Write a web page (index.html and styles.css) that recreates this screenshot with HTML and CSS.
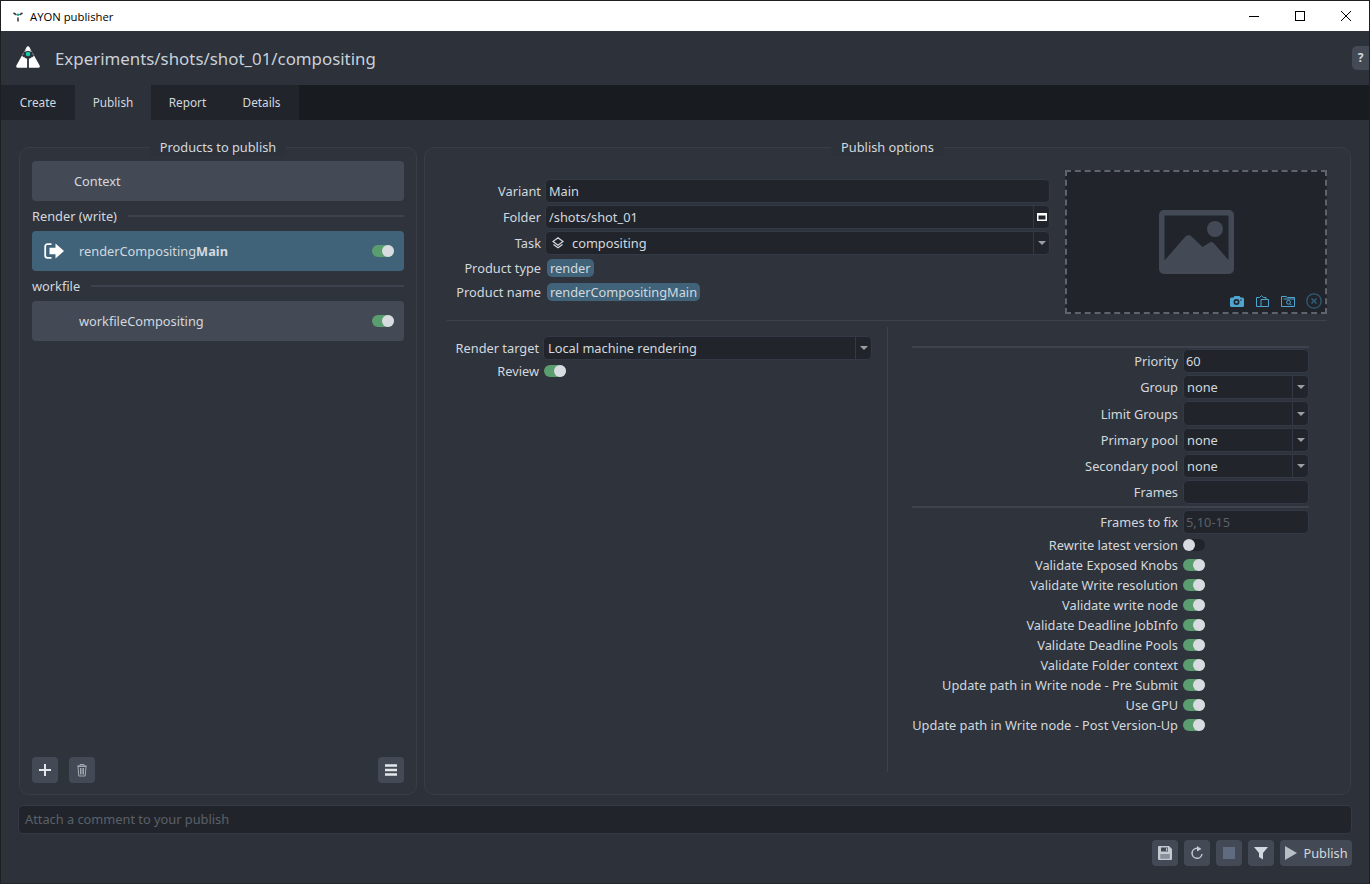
FILE: index.html
```html
<!DOCTYPE html>
<html lang="en">
<head>
<meta charset="utf-8">
<title>AYON publisher</title>
<link rel="stylesheet" href="styles.css">
</head>
<body>
<div class="window">
  <div class="titlebar">
    <svg class="app-icon" viewBox="0 0 12 12"><path d="M1.500 3 4.500 4.800 M10.500 3 7.500 4.800 M6 7.500V11.500" stroke="#333" stroke-width="1.500" fill="none"/><circle cx="6" cy="4.800" r="1.200" fill="#14a88f"/></svg>
    <span class="title-text">AYON publisher</span>
    <div class="win-controls">
      <svg class="win-btn" viewBox="0 0 46 30"><path d="M18 15.500H28" stroke="#000" fill="none"/></svg>
      <svg class="win-btn" viewBox="0 0 46 30"><rect x="18.500" y="10.500" width="9" height="9" stroke="#000" fill="none"/></svg>
      <svg class="win-btn" viewBox="0 0 46 30"><path d="M18 10 28 20M28 10 18 20" stroke="#000" fill="none"/></svg>
    </div>
  </div>

  <header class="header">
    <svg class="logo" viewBox="0 0 24 22">
      <path fill="#fff" stroke="#fff" stroke-width="3" stroke-linejoin="round" d="M12 1.800 22.300 20.300H1.700Z"/>
      <circle cx="12" cy="8" r="4.800" fill="#2c313a"/>
      <path d="M12 11V22M8.300 10.500 6.500 9M15.700 10.500 17.500 9" stroke="#2c313a" stroke-width="1.800" fill="none"/>
      <path fill="#fff" d="M12 1.500 16 6 12 4.700 8 6Z"/>
      <circle cx="12" cy="8" r="2.300" fill="#14c9a8"/>
    </svg>
    <h1 class="context-path">Experiments/shots/shot_01/compositing</h1>
    <div class="help-btn">?</div>
  </header>

  <nav class="tabs">
    <div class="tab tab-create">Create</div>
    <div class="tab tab-publish active">Publish</div>
    <div class="tab tab-report">Report</div>
    <div class="tab tab-details">Details</div>
  </nav>

  <main class="main">
    <div class="panels">
      <section class="panel panel-products">
        <div class="panel-title">Products to publish</div>
        <div class="item item-context"><span>Context</span></div>
        <div class="group-head"><span>Render (write)</span><i></i></div>
        <div class="item selected">
          <svg class="item-icon" viewBox="0 0 20 16"><path d="M7.500 1.200H3.500A2.300 2.300 0 0 0 1.200 3.500V12.500A2.300 2.300 0 0 0 3.500 14.800H7.500" stroke="#fff" stroke-width="1.800" fill="none"/><path fill="#fff" d="M5.500 4.800H11.500V.5L20 8 11.500 15.500V11.200H5.500Z"/></svg>
          <span class="item-name">renderCompositing<b>Main</b></span>
          <span class="toggle on"></span>
        </div>
        <div class="group-head"><span>workfile</span><i></i></div>
        <div class="item">
          <span class="item-name no-icon">workfileCompositing</span>
          <span class="toggle on"></span>
        </div>
        <div class="list-tools">
          <button class="tool"><svg viewBox="0 0 14 14"><path d="M7 1V13M1 7H13" stroke="#e4e7ea" stroke-width="2" fill="none"/></svg></button>
          <button class="tool"><svg viewBox="0 0 14 14"><path d="M2 3H12M5 3V1.500H9V3M3 3.500 3.800 13H10.200L11 3.500ZM5.500 5V11.500M7 5V11.500M8.500 5V11.500" stroke="#a3a9b1" fill="none"/></svg></button>
          <button class="tool tool-end"><svg viewBox="0 0 14 14"><path d="M1 2.500H13M1 7H13M1 11.500H13" stroke="#e4e7ea" stroke-width="2.400" fill="none"/></svg></button>
        </div>
      </section>

      <section class="panel panel-options">
        <div class="panel-title">Publish options</div>
        <div class="top-row">
          <div class="main-form">
            <div class="flabel">Variant</div><div class="field">Main</div>
            <div class="flabel">Folder</div>
            <div class="field split"><span class="grow">/shots/shot_01</span><span class="side"><svg class="folder-ic" viewBox="0 0 10 8"><path d="M0 0H10V8H0ZM1.500 2.500V6.500H8.500V2.500Z" fill="#fff" fill-rule="evenodd"/></svg></span></div>
            <div class="flabel">Task</div>
            <div class="field split"><span class="grow task"><svg class="task-ic" viewBox="0 0 12 12"><path d="M6 .8 11 4.500 6 8.200 1 4.500ZM1.500 7.500 6 10.800 10.500 7.500" stroke="#d3d8de" fill="none" stroke-width="1.200"/></svg>compositing</span><span class="side"><i class="arrow"></i></span></div>
            <div class="flabel chip-row">Product type</div><div class="chip-row"><span class="chip">render</span></div>
            <div class="flabel chip-row-b">Product name</div><div class="chip-row-b"><span class="chip">renderCompositingMain</span></div>
          </div>
          <div class="thumb">
            <svg class="thumb-ph" viewBox="0 0 75 64"><path fill="#434a56" fill-rule="evenodd" d="M5 0H70A5 5 0 0 1 75 5V59A5 5 0 0 1 70 64H5A5 5 0 0 1 0 59V5A5 5 0 0 1 5 0ZM5.500 5.500V50.500L26 27C28 24.500 31 24.500 33 27L43.500 37 50 33C51.500 31.500 53 31.500 54.500 33L69.500 50V5.500Z"/><circle cx="56" cy="19" r="8" fill="#434a56"/></svg>
            <div class="thumb-tools">
              <svg class="tt-cam" viewBox="0 0 14 11"><path fill="#4ea5d0" fill-rule="evenodd" d="M1.500 1.500H3.500L4.500 0H9.500L10.500 1.500H12.500A1.500 1.500 0 0 1 14 3V9.500A1.500 1.500 0 0 1 12.500 11H1.500A1.500 1.500 0 0 1 0 9.500V3A1.500 1.500 0 0 1 1.500 1.500ZM6.500 3A3 3 0 1 0 6.500 9 3 3 0 1 0 6.500 3ZM6.500 4.700A1.300 1.300 0 1 1 6.500 7.300 1.300 1.300 0 1 1 6.500 4.700ZM11 3.200A.8.8 0 1 0 11 4.800 .8.8 0 1 0 11 3.200Z"/></svg>
              <svg class="tt-clip" viewBox="0 0 13 12"><path d="M5 11.500H.5V2.500H3.500L5.500.7 7.500 2.500H10V4.500M5 4.500H12.500V11.500H5Z" stroke="#4ea5d0" fill="none"/></svg>
              <svg class="tt-folder" viewBox="0 0 14 11"><path d="M.5 10.500V.5H5L6.500 1.500H13.500V10.500ZM2.500 3H13" stroke="#4ea5d0" fill="none"/><circle cx="7.500" cy="6.300" r="1.900" stroke="#4ea5d0" fill="none"/><path d="M9 7.800 10.500 9.300" stroke="#4ea5d0"/></svg>
              <svg class="tt-close" viewBox="0 0 16 16"><circle cx="8" cy="8" r="7.200" stroke="#2f5d78" stroke-width="1.300" fill="none"/><path d="M5.500 5.500 10.500 10.500M10.500 5.500 5.500 10.500" stroke="#2f5d78" stroke-width="1.600"/></svg>
            </div>
          </div>
        </div>
        <hr class="sep">
        <div class="bottom-row">
          <div class="attrs">
            <div class="flabel">Render target</div>
            <div class="field split"><span class="grow">Local machine rendering</span><span class="side"><i class="arrow"></i></span></div>
            <div class="flabel toggle-row">Review</div><div class="toggle-row"><span class="toggle on"></span></div>
          </div>
          <div class="vdiv"></div>
          <div class="deadline">
            <hr class="sep2 sep2-a">
            <div class="dform">
              <div class="flabel">Priority</div><div class="field">60</div>
              <div class="flabel">Group</div><div class="field split"><span class="grow">none</span><span class="side"><i class="arrow"></i></span></div>
              <div class="flabel tall">Limit Groups</div><div class="field split tall"><span class="grow"></span><span class="side"><i class="arrow"></i></span></div>
              <div class="flabel">Primary pool</div><div class="field split"><span class="grow">none</span><span class="side"><i class="arrow"></i></span></div>
              <div class="flabel">Secondary pool</div><div class="field split"><span class="grow">none</span><span class="side"><i class="arrow"></i></span></div>
              <div class="flabel">Frames</div><div class="field"></div>
            </div>
            <hr class="sep2 sep2-b">
            <div class="dform">
              <div class="flabel">Frames to fix</div><div class="field placeholder">5,10-15</div>
            </div>
            <div class="dtoggles">
              <div class="flabel">Rewrite latest version</div><div class="tcell"><span class="toggle"></span></div>
              <div class="flabel">Validate Exposed Knobs</div><div class="tcell"><span class="toggle on"></span></div>
              <div class="flabel">Validate Write resolution</div><div class="tcell"><span class="toggle on"></span></div>
              <div class="flabel">Validate write node</div><div class="tcell"><span class="toggle on"></span></div>
              <div class="flabel">Validate Deadline JobInfo</div><div class="tcell"><span class="toggle on"></span></div>
              <div class="flabel">Validate Deadline Pools</div><div class="tcell"><span class="toggle on"></span></div>
              <div class="flabel">Validate Folder context</div><div class="tcell"><span class="toggle on"></span></div>
              <div class="flabel">Update path in Write node - Pre Submit</div><div class="tcell"><span class="toggle on"></span></div>
              <div class="flabel">Use GPU</div><div class="tcell"><span class="toggle on"></span></div>
              <div class="flabel">Update path in Write node - Post Version-Up</div><div class="tcell"><span class="toggle on"></span></div>
            </div>
          </div>
        </div>
      </section>
    </div>

    <div class="comment">Attach a comment to your publish</div>

    <div class="actions">
      <button class="action"><svg viewBox="0 0 14 14"><path fill-rule="evenodd" fill="#c5cad1" d="M1 0H11L14 3V13A1 1 0 0 1 13 14H1A1 1 0 0 1 0 13V1A1 1 0 0 1 1 0ZM3 1.500V5.500H10V1.500ZM8 2.200V4.800H9.300V2.200ZM2.500 8V12.500H11.500V8Z"/><path fill="#c5cad1" opacity=".55" d="M2.500 8H11.500V12.500H2.500Z"/></svg></button>
      <button class="action"><svg viewBox="0 0 14 14"><path d="M7 2.300A5 5 0 1 0 12 8" stroke="#c5cad1" stroke-width="1.500" fill="none"/><path d="M7 0 11.500 3 7 5.500Z" fill="#c5cad1"/></svg></button>
      <button class="action"><span class="stop"></span></button>
      <button class="action"><svg viewBox="0 0 14 14"><path fill="#d3d8de" d="M0 1H14L9 7V13.500L5 11V7Z"/></svg></button>
      <button class="action action-publish"><svg viewBox="0 0 12 14"><path fill="#b9bec6" d="M0 0 12 7 0 14Z"/></svg><span>Publish</span></button>
    </div>
  </main>
</div>
</body>
</html>
```
FILE: styles.css
```css
* { box-sizing: border-box; }
html, body { margin: 0; padding: 0; }
body {
  width: 1370px;
  height: 884px;
  overflow: hidden;
  background: #2c313a;
  font-family: "Noto Sans", sans-serif;
  font-size: 12.800px;
  color: #d3d8de;
}
.window {
  height: 884px;
  display: flex;
  flex-direction: column;
  border: 1px solid #1d1f22;
  border-bottom-color: #26282c;
}
.titlebar {
  height: 30px;
  flex: none;
  background: #fff;
  color: #000;
  display: flex;
  align-items: center;
  padding-left: 11px;
  font-family: "Open Sans", "Noto Sans", sans-serif;
  font-size: 11.300px;
}
.app-icon { width: 12px; height: 12px; margin-right: 6px; }
.title-text { flex: 1; }
.win-controls { display: flex; }
.win-btn { width: 46px; height: 30px; display: block; }

.header {
  height: 54px;
  flex: none;
  display: flex;
  align-items: center;
  padding-left: 15px;
}
.logo { width: 24px; height: 22px; margin-right: 15px; margin-top: -2px; }
.context-path {
  margin: 0;
  flex: 1;
  font-size: 16.870px;
  font-weight: 400;
  color: #c9d0d8;
}
.help-btn {
  width: 17px;
  height: 24px;
  margin-top: -1px;
  background: #434a56;
  border-radius: 5px 0 0 5px;
  color: #d3d8de;
  font-weight: 700;
  font-size: 12px;
  line-height: 24px;
  text-align: center;
}

.tabs {
  height: 35px;
  flex: none;
  display: flex;
  background: #181b1f;
}
.tab {
  background: #21252b;
  font-size: 11.800px;
  line-height: 35px;
  text-align: center;
  color: #d3d8de;
}
.tab-create { width: 74px; }
.tab-publish { width: 76px; }
.tab-report { width: 73px; }
.tab-details { width: 75px; }
.tab.active { background: #2c313a; }

.main {
  flex: 1;
  min-height: 0;
  display: flex;
  flex-direction: column;
  padding: 27px 17px 0 17px;
}
.panels {
  height: 648px;
  flex: none;
  display: flex;
  gap: 7px;
  margin: 0 1px;
}
.panel {
  position: relative;
  border: 1px solid #383e49;
  border-radius: 10px;
  background: #2e333c;
}
.panel-title {
  position: absolute;
  top: -10px;
  left: 0;
  right: 0;
  margin: 0 auto;
  width: max-content;
  padding: 0 10px;
  background: #2c313a;
  line-height: 18px;
  color: #d3d8de;
}
.panel-products {
  width: 398px;
  flex: none;
  display: flex;
  flex-direction: column;
  padding: 13px 12px 11px 12px;
}
.item {
  height: 40px;
  flex: none;
  display: flex;
  align-items: center;
  background: #434a56;
  border-radius: 4px;
  padding-right: 10px;
}
.item-context span { margin-left: 42px; }
.item.selected { background: #40637a; }
.item-icon { width: 20px; height: 16px; margin-left: 12px; margin-right: 15px; }
.item-name { flex: 1; }
.item-name.no-icon { margin-left: 47px; }
.group-head {
  height: 30px;
  flex: none;
  display: flex;
  align-items: center;
  gap: 11px;
}
.group-head i { flex: 1; height: 2px; background: #3c424e; }
.toggle {
  display: block;
  position: relative;
  width: 22px;
  height: 12px;
  border-radius: 6px;
  background: #21252b;
}
.toggle.on { background: #5a9e6f; }
.toggle::after {
  content: "";
  position: absolute;
  top: 0;
  left: 0;
  width: 12px;
  height: 12px;
  border-radius: 50%;
  background: #d8dbe0;
}
.toggle.on::after { left: 10px; }
.list-tools {
  margin-top: auto;
  display: flex;
  gap: 11px;
}
.tool {
  width: 26px;
  height: 26px;
  padding: 0;
  border: 0;
  border-radius: 4px;
  background: #434a56;
  display: flex;
  align-items: center;
  justify-content: center;
}
.tool svg { width: 14px; height: 14px; display: block; }
.tool-end { margin-left: auto; }

.panel-options {
  flex: 1;
  padding: 22px 23px 0 22px;
}
.top-row { display: flex; gap: 15px; }
.main-form {
  flex: 1;
  display: grid;
  grid-template-columns: 94px 1fr;
  grid-auto-rows: 24px;
  column-gap: 4px;
  row-gap: 2px;
  padding-top: 9px;
  align-content: start;
}
.flabel {
  text-align: right;
  line-height: 24px;
  white-space: nowrap;
  color: #d3d8de;
}
.field {
  height: 24px;
  background: #21252b;
  border: 1px solid #343a45;
  border-radius: 5px;
  padding-left: 3px;
  line-height: 22px;
  color: #d3d8de;
}
.field.split { display: flex; padding-left: 0; }
.grow { flex: 1; padding-left: 3px; display: flex; align-items: center; }
.side {
  width: 16px;
  flex: none;
  border-left: 1px solid #343a45;
  display: flex;
  align-items: center;
  justify-content: center;
}
.arrow {
  width: 0;
  height: 0;
  border-left: 4px solid transparent;
  border-right: 4px solid transparent;
  border-top: 4px solid #9a9fa6;
}
.folder-ic { width: 10px; height: 8px; display: block; }
.task-ic { width: 12px; height: 12px; margin-left: 3px; margin-right: 8px; }
.chip-row { padding-top: 2px; line-height: 18px; }
.chip-row-b { line-height: 18px; }
.chip {
  display: inline-block;
  background: #40637a;
  border-radius: 5px;
  padding: 0 3px;
  line-height: 18px;
  height: 18px;
  margin-left: 2px;
  vertical-align: top;
}
.thumb {
  position: relative;
  width: 262px;
  height: 144px;
  flex: none;
  background: #21252b;
  border: 2px dashed #5f646c;
  display: flex;
  align-items: center;
  justify-content: center;
}
.thumb-ph { width: 75px; height: 64px; display: block; margin-top: -1px; }
.thumb-tools {
  position: absolute;
  right: 3px;
  bottom: 3px;
  display: flex;
  align-items: center;
  gap: 12px;
}
.tt-cam { width: 14px; height: 11px; }
.tt-clip { width: 13px; height: 12px; }
.tt-folder { width: 14px; height: 11px; }
.tt-close { width: 16px; height: 16px; margin-left: -1px; }
.sep {
  margin: 6px 0;
  border: 0;
  height: 1px;
  background: #3c424e;
}
.bottom-row { display: flex; height: 445px; }
.attrs {
  width: 425px;
  flex: none;
  display: grid;
  grid-template-columns: 92px 329px;
  column-gap: 4px;
  grid-auto-rows: 24px;
  align-content: start;
  padding-top: 9px;
}
.attrs .grow { padding-left: 4px; }
.toggle-row { height: 22px; display: flex; justify-content: flex-end; align-items: center; }
.attrs .toggle-row:last-child { justify-content: flex-start; padding-left: 1px; }
.vdiv { width: 1px; background: #3c424e; margin-left: 15px; margin-right: 24px; flex: none; }
.deadline { width: 397px; flex: none; padding-top: 19px; }
.sep2 { border: 0; height: 2px; margin: 0; background: #3c424e; }
.sep2-a { margin-bottom: 1px; }
.sep2-b { margin-top: 2px; margin-bottom: 2px; }
.dform {
  display: grid;
  grid-template-columns: 266px 126px;
  column-gap: 5px;
  row-gap: 2px;
}
.dform .field:not(.split) { padding-left: 2px; }
.dform .tall { height: 25px; line-height: 23px; }
.dform .flabel.tall { line-height: 26px; }
.placeholder { color: #5b6068; }
.dtoggles {
  display: grid;
  grid-template-columns: 266px 126px;
  column-gap: 5px;
  grid-auto-rows: 20px;
  margin-top: 1px;
}
.dtoggles .flabel { line-height: 20px; }
.tcell { display: flex; align-items: center; }

.comment {
  margin-top: 10px;
  height: 29px;
  flex: none;
  background: #21252b;
  border: 1px solid #343a45;
  border-radius: 5px;
  padding-left: 6px;
  line-height: 27px;
  color: #5b6068;
}
.actions {
  margin-top: 6px;
  display: flex;
  justify-content: flex-end;
  gap: 6px;
}
.action {
  width: 26px;
  height: 26px;
  padding: 0;
  border: 0;
  border-radius: 4px;
  background: #434a56;
  display: flex;
  align-items: center;
  justify-content: center;
  font: inherit;
  color: #d3d8de;
}
.action svg { width: 14px; height: 14px; display: block; }
.stop { width: 12px; height: 12px; background: #5f6c80; display: block; }
.action-publish { width: 72px; gap: 6px; padding-left: 1px; }
.action-publish svg { width: 12px; height: 14px; }
```
